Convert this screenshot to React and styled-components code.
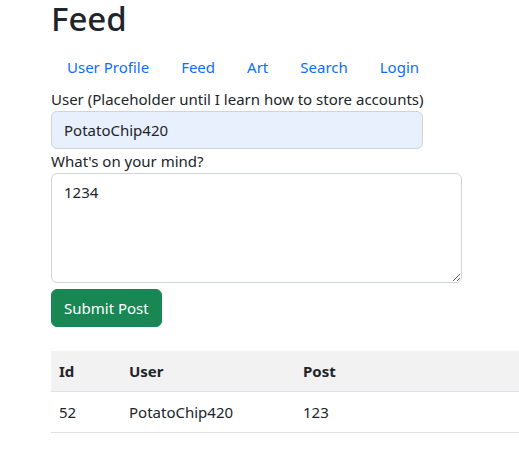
import React from "react";
import styled, { createGlobalStyle } from "styled-components";

const Global = createGlobalStyle`
  html, body { margin: 0; padding: 0; overflow: hidden; background: #fff; }
  body {
    font-family: "Segoe UI", "Noto Sans", sans-serif;
    font-size: 15px;
    line-height: 24px;
    color: #212529;
  }
  * { box-sizing: border-box; }
`;

const Page = styled.div`
  padding: 0 0 0 51px;
  width: 640px;
`;

const Title = styled.h1`
  margin: 0;
  padding: 0;
  font-size: 33px;
  font-weight: 500;
  line-height: 38px;
  height: 47px;
`;

const Nav = styled.ul`
  display: flex;
  list-style: none;
  margin: 0;
  padding: 0;
`;

const NavLink = styled.a`
  display: block;
  padding: 8px 16px;
  color: #0d6efd;
  text-decoration: none;
`;

const Label = styled.label`
  display: block;
`;

const Input = styled.input`
  display: block;
  width: ${(p) => p.$w}px;
  height: 38px;
  padding: 6px 12px;
  font: inherit;
  color: #212529;
  background: #e8f0fe;
  border: 1px solid #ced4da;
  border-radius: 6px;
  outline: none;
`;

const TextArea = styled.textarea`
  display: block;
  width: 411px;
  height: 110px;
  padding: 6px 12px;
  font: inherit;
  color: #212529;
  background: #fff;
  border: 1px solid #ced4da;
  border-radius: 6px;
  outline: none;
  resize: vertical;
`;

const Button = styled.button`
  display: block;
  margin-top: 6px;
  height: 38px;
  padding: 6px 12px;
  font: inherit;
  color: #fff;
  background: #198754;
  border: 1px solid #198754;
  border-radius: 6px;
`;

const Table = styled.table`
  margin-top: 24px;
  width: 100%;
  border-collapse: collapse;
`;

const Th = styled.th`
  text-align: left;
  font-weight: 700;
  padding: 8px;
  height: 40px;
  background: #f2f2f2;
  border-bottom: 1px solid #dee2e6;
  width: ${(p) => (p.$w ? p.$w + "px" : "auto")};
`;

const Td = styled.td`
  padding: 8px;
  height: 41px;
  border-bottom: 1px solid #dee2e6;
`;

export default function App() {
  const links = ["User Profile", "Feed", "Art", "Search", "Login"];
  return (
    <>
      <Global />
      <Page>
        <Title>Feed</Title>
        <Nav>
          {links.map((l) => (
            <li key={l}>
              <NavLink href="#">{l}</NavLink>
            </li>
          ))}
        </Nav>
        <Label>User (Placeholder until I learn how to store accounts)</Label>
        <Input $w={372} defaultValue="PotatoChip420" />
        <Label>What's on your mind?</Label>
        <TextArea defaultValue="1234" />
        <Button>Submit Post</Button>
        <Table>
          <thead>
            <tr>
              <Th $w={70}>Id</Th>
              <Th $w={174}>User</Th>
              <Th>Post</Th>
            </tr>
          </thead>
          <tbody>
            <tr>
              <Td>52</Td>
              <Td>PotatoChip420</Td>
              <Td>123</Td>
            </tr>
          </tbody>
        </Table>
      </Page>
    </>
  );
}
